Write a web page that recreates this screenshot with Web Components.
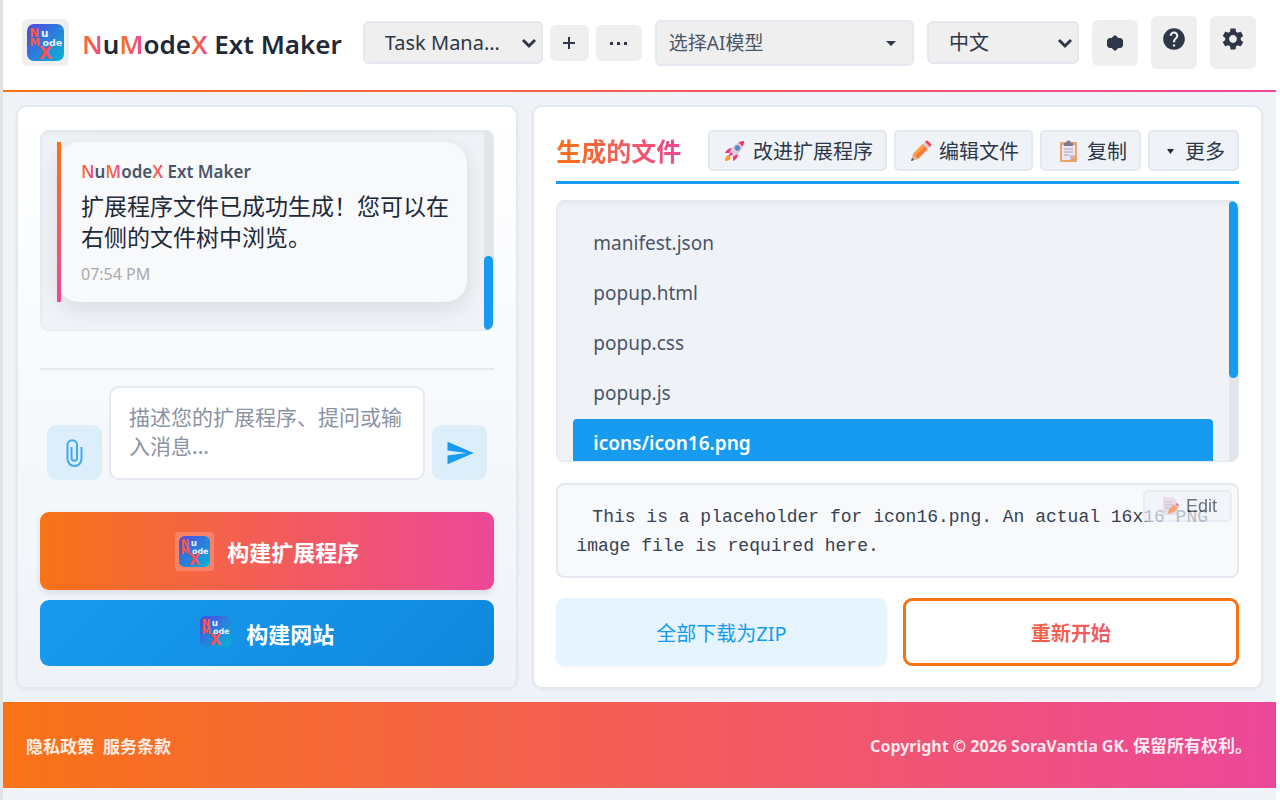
<!DOCTYPE html>
<html lang="zh-CN">
<head>
<meta charset="utf-8">
<meta name="viewport" content="width=device-width, initial-scale=1">
<title>NuModeX Ext Maker</title>
<style>
  :root {
    --orange: #f97316;
    --pink: #ec4899;
    --brand: linear-gradient(90deg, #f97316, #ec4899);
    --blue: #179bf0;
    --ink: #2d3748;
    --line: #e4e9f0;
    --pale: #eff3f8;
    --grey: #efefef;
  }
  body {
    margin: 0;
    border-left: 3px solid #e3e3e3;
    border-right: 4px solid #fff;
    background: var(--pale);
    color: var(--ink);
    font-family: "Noto Sans", "Noto Sans CJK SC", sans-serif;
  }
</style>
</head>
<body>
<nx-app></nx-app>

<script>
// shared by every component, each shadow root gets its own copy
const base = `
  *, *::before, *::after { box-sizing: border-box; }
  button, select, textarea { font-family: inherit; color: inherit; margin: 0; }
  button { cursor: pointer; }
  svg { display: block; flex: none; }
`;

const define = (name, html) => {
  customElements.define(name, class extends HTMLElement {
    constructor() {
      super();
      const shadow = this.attachShadow({ mode: "open" });
      shadow.innerHTML = `<style>${base}</style>` + (typeof html === "function" ? html(this) : html);
    }
  });
};

// square app logo, scales with --size
define("nx-logo", `
  <style>
    :host { display: block; width: var(--size, 37px); height: var(--size, 37px); flex: none; }
    svg { width: 100%; height: 100%; }
    text { font-family: "DejaVu Sans", sans-serif; font-weight: bold; }
  </style>
  <svg viewBox="0 0 74 74" aria-hidden="true">
    <defs>
      <linearGradient id="bg" x1="0" y1="0" x2="1" y2="1">
        <stop offset="0" stop-color="#4f46e5"/><stop offset="1" stop-color="#06b6d4"/>
      </linearGradient>
    </defs>
    <rect width="74" height="74" rx="14" fill="url(#bg)"/>
    <circle cx="66" cy="9" r="2" fill="#38a3d8"/>
    <text x="5" y="26" font-size="23" fill="#ff5a3c">N</text>
    <text x="28" y="25" font-size="21" fill="#e8f1ff">u</text>
    <text x="5" y="43" font-size="21" fill="#ff5a3c">M</text>
    <text x="31" y="43" font-size="19" fill="#e8f1ff">ode</text>
    <text x="23" y="69" font-size="36" fill="#f9505a">X</text>
  </svg>
`);

// product name with the gradient capitals
define("nx-brand", `
  <style>
    :host { display: inline-block; white-space: nowrap; }
    b { font-weight: inherit; background: linear-gradient(90deg, var(--orange), var(--pink)); -webkit-background-clip: text; background-clip: text; color: transparent; }
  </style>
  <b>N</b>u<b>M</b>ode<b>X</b> Ext Maker
`);

// drop-down: label is the accessible name, value the option shown
define("nx-select", (el) => `
  <style>
    :host { display: block; position: relative; height: 43px; min-width: 0; }
    :host([big]) { height: 46px; }
    select { appearance: none; width: 100%; height: 100%; padding: 0 40px 0 20px; border: 2px solid var(--line); border-radius: 6px; background: var(--grey); font-size: 20px; }
    :host([big]) select { padding-left: 12px; color: #4a5568; font-size: 19px; }
    svg { position: absolute; right: 6px; top: 50%; margin-top: -8px; pointer-events: none; }
    :host([big]) svg { right: 15px; }
  </style>
  <select aria-label="${el.getAttribute("label")}"><option>${el.getAttribute("value")}</option></select>
  ${el.hasAttribute("big")
    ? `<svg width="16" height="16" viewBox="0 0 16 16"><path d="M3 6h10l-5 5z" fill="#2d3748"/></svg>`
    : `<svg width="16" height="16" viewBox="0 0 16 16"><path d="M2 5l6 6 6-6" fill="none" stroke="#2d3748" stroke-width="3"/></svg>`}
`);

// grey header button
define("nx-icon-button", (el) => `
  <style>
    :host { display: block; flex: none; }
    button { display: flex; align-items: center; justify-content: center; width: 46px; height: 46px; padding: 0; border: 0; border-radius: 6px; background: var(--grey); font-size: 20px; font-weight: 600; }
    :host([small]) button { width: 39px; height: 36px; }
    :host([wide]) button { width: 46px; height: 36px; }
    :host([tall]) button { height: 53px; padding-bottom: 8px; }
  </style>
  <button aria-label="${el.getAttribute("label")}"><slot></slot></button>
`);

define("nx-header", `
  <style>
    :host { display: block; background: #fff; border-bottom: 2px solid; border-image: var(--brand) 1; }
    header { display: flex; align-items: center; gap: 13px; padding: 16px 20px 21px 19px; }
    .mark { padding: 5px; border-radius: 6px; background: var(--grey); }
    nx-brand { font-size: 26px; line-height: 40px; font-weight: 600; color: #1f2937; margin-top: 2px; }
    .tasks { display: flex; align-items: center; gap: 7px; margin-left: 8px; }
    .tasks nx-select { width: 180px; }
    .model { flex: 1; }
    .lang { width: 152px; }
  </style>
  <header>
    <div class="mark"><nx-logo></nx-logo></div>
    <nx-brand></nx-brand>
    <div class="tasks">
      <nx-select label="Task" value="Task Mana…"></nx-select>
      <nx-icon-button small label="New task"><svg width="14" height="14" viewBox="0 0 14 14"><path d="M7 1v12M1 7h12" stroke="#2d3748" stroke-width="2"/></svg></nx-icon-button>
      <nx-icon-button wide label="Task options"><svg width="18" height="4" viewBox="0 0 18 4"><path d="M0 1h3v3H0zM7 1h3v3H7zM14 1h3v3h-3z" fill="#2d3748"/></svg></nx-icon-button>
    </div>
    <nx-select class="model" big label="AI模型" value="选择AI模型"></nx-select>
    <nx-select class="lang" label="语言" value="中文"></nx-select>
    <nx-icon-button label="Theme"><svg width="16" height="16" viewBox="0 0 16 16"><path d="M8 0l3.500 3H14l2 2v6l-2 2h-2.500L8 16l-3.500-3H2l-2-2V5l2-2h2.500z" fill="#2d3748"/></svg></nx-icon-button>
    <nx-icon-button tall label="Help"><svg width="26" height="26" viewBox="0 0 24 24" fill="#2d3748"><path d="M12 2C6.48 2 2 6.48 2 12s4.48 10 10 10 10-4.48 10-10S17.52 2 12 2zm1 17h-2v-2h2v2zm2.07-7.75l-.9.92C13.45 12.9 13 13.5 13 15h-2v-.5c0-1.1.45-2.1 1.17-2.83l1.24-1.26c.37-.36.59-.86.59-1.41 0-1.1-.9-2-2-2s-2 .9-2 2H8c0-2.21 1.79-4 4-4s4 1.79 4 4c0 .88-.36 1.68-.93 2.25z"/></svg></nx-icon-button>
    <nx-icon-button tall label="Settings"><svg width="26" height="26" viewBox="0 0 24 24" fill="#2d3748"><path d="M19.14 12.94c.04-.3.06-.61.06-.94 0-.32-.02-.64-.07-.94l2.03-1.58c.18-.14.23-.41.12-.61l-1.92-3.32c-.12-.22-.37-.29-.59-.22l-2.39.96c-.5-.38-1.03-.7-1.62-.94l-.36-2.54c-.04-.24-.24-.41-.48-.41h-3.84c-.24 0-.43.17-.47.41l-.36 2.54c-.59.24-1.13.57-1.62.94l-2.39-.96c-.22-.08-.47 0-.59.22L2.74 8.87c-.12.21-.08.47.12.61l2.03 1.58c-.05.3-.09.63-.09.94s.02.64.07.94l-2.03 1.58c-.18.14-.23.41-.12.61l1.92 3.32c.12.22.37.29.59.22l2.39-.96c.5.38 1.03.7 1.62.94l.36 2.54c.05.24.24.41.48.41h3.84c.24 0 .44-.17.47-.41l.36-2.54c.59-.24 1.13-.56 1.62-.94l2.39.96c.22.08.47 0 .59-.22l1.92-3.32c.12-.22.07-.47-.12-.61l-2.01-1.58zM12 15.6c-1.98 0-3.6-1.62-3.6-3.6s1.62-3.6 3.6-3.6 3.6 1.62 3.6 3.6-1.62 3.6-3.6 3.6z"/></svg></nx-icon-button>
  </header>
`);

define("nx-card", `
  <style>
    :host { display: flex; flex-direction: column; min-width: 0; min-height: 0; padding: 23px 22px 21px; border: 2px solid var(--line); border-radius: 10px; background: #fff; box-shadow: 0 1px 3px rgba(0, 0, 0, .05); }
    :host([tint]) { background: linear-gradient(#fff, var(--pale)); }
  </style>
  <slot></slot>
`);

// clipped box with its own scrollbar; --thumb is the length of the handle
define("nx-scroll", `
  <style>
    :host { display: flex; flex: 1 1 0; min-height: 0; overflow: hidden; border: 1px solid var(--line); border-radius: 8px; background: var(--pale); box-shadow: inset 0 2px 4px rgba(0, 0, 0, .05); }
    .view { flex: 1; min-width: 0; overflow: hidden; }
    .track { display: flex; flex-direction: column; width: 9px; background: #e2e6ea; }
    :host([end]) .track { justify-content: flex-end; }
    .thumb { height: var(--thumb, 50%); border-radius: 5px; background: var(--blue); }
  </style>
  <div class="view"><slot></slot></div>
  <div class="track"><div class="thumb"></div></div>
`);

define("nx-message", (el) => `
  <style>
    :host { display: block; margin: 11px 17px 28px 16px; padding: 19px 18px 17px 20px; border-left: 4px solid; border-image: linear-gradient(var(--orange), var(--pink)) 1; border-radius: 22px; background: #f8f9fb; box-shadow: 0 6px 22px rgba(0, 0, 0, .1); }
    nx-brand { display: block; font-size: 17px; line-height: 22px; font-weight: 600; color: #4a5568; }
    p { margin: 8px 0 10px; font-size: 23px; line-height: 31px; color: #1f2937; }
    time { display: block; font-size: 16px; line-height: 22px; color: #a9a9a9; }
  </style>
  <nx-brand></nx-brand>
  <p><slot></slot></p>
  <time>${el.getAttribute("time")}</time>
`);

define("nx-composer", `
  <style>
    :host { display: block; margin-top: 37px; padding: 16px 7px 0; border-top: 2px solid var(--line); }
    form { display: flex; align-items: flex-end; gap: 7px; }
    textarea { flex: 1; min-width: 0; height: 94px; padding: 15px 18px; border: 2px solid var(--line); border-radius: 10px; background: #fff; font-size: 21px; line-height: 29px; resize: none; overflow: hidden; }
    textarea::placeholder { color: #8a93a3; }
    button { display: flex; align-items: center; justify-content: center; width: 55px; height: 55px; padding: 0; border: 0; border-radius: 9px; background: #dceefa; }
  </style>
  <form>
    <button type="button" aria-label="附件"><svg width="18" height="28" viewBox="0 0 18 28" fill="none" stroke="#3fa8ee" stroke-width="2"><path d="M5.500 8v11a2.700 2.700 0 0 0 5.500 0V6a4.700 4.700 0 0 0-9.500 0v14a7 7 0 0 0 14 0V8"/></svg></button>
    <textarea aria-label="消息" placeholder="描述您的扩展程序、提问或输入消息..."></textarea>
    <button type="button" aria-label="发送"><svg width="30" height="30" viewBox="0 0 24 24" fill="#179bf0"><path d="M2.010 21L23 12 2.010 3 2 10l15 2-15 2z"/></svg></button>
  </form>
`);

define("nx-build", `
  <style>
    :host { display: block; margin-top: 32px; }
    :host([site]) { margin-top: 10px; }
    button { display: flex; align-items: center; justify-content: center; gap: 13px; width: 100%; height: 78px; padding: 0; border: 0; border-radius: 9px; background: var(--brand); color: #fff; font-size: 22px; font-weight: 700; box-shadow: 0 3px 6px rgba(0, 0, 0, .1); }
    :host([site]) button { height: 66px; background: linear-gradient(135deg, #179bf0, #0f88dc); box-shadow: none; }
    .mark { padding: 4px; border-radius: 4px; background: rgba(255, 255, 255, .2); --size: 31px; }
    :host([site]) .mark { background: none; padding: 0 2px 4px 0; }
  </style>
  <button type="button"><span class="mark"><nx-logo></nx-logo></span><slot></slot></button>
`);

define("nx-tool", `
  <style>
    :host { display: block; flex: none; }
    button { display: flex; align-items: center; gap: 7px; height: 41px; padding: 0 12px 0 14px; border: 2px solid var(--line); border-radius: 5px; background: var(--pale); font-size: 20px; white-space: nowrap; }
  </style>
  <button type="button"><slot name="icon"></slot><slot></slot></button>
`);

define("nx-files-head", `
  <style>
    :host { display: flex; align-items: center; justify-content: space-between; padding-bottom: 10px; border-bottom: 3px solid var(--blue); }
    h2 { margin: 0; font-size: 25px; line-height: 36px; font-weight: 700; white-space: nowrap; background: var(--brand); -webkit-background-clip: text; background-clip: text; color: transparent; }
    .tools { display: flex; gap: 7px; }
  </style>
  <h2>生成的文件</h2>
  <div class="tools">
    <nx-tool>
      <svg slot="icon" width="22" height="22" viewBox="0 0 22 22">
        <path d="M1 21c0-3 1-5 3-6l3 3c-1 2-3 3-6 3z" fill="#ff9a2e"/>
        <path d="M8 8c-3 0-6 2-7 5l5 0zM14 14c0 3-2 6-5 7l0-5z" fill="#f5337c"/>
        <path d="M5 14C7 7 12 2 20 1c0 8-5 13-12 16z" fill="#d9cfe3"/>
        <path d="M20 1c-2 0-4 .5-5.500 1.500l4 4C19.500 5 20 3 20 1z" fill="#f5385e"/>
        <path d="M7 12l-3 5 5-3z" fill="#f0287a"/>
        <circle cx="13.500" cy="8" r="2.300" fill="#4a8fe0" stroke="#7b7299" stroke-width="1"/>
      </svg>
      改进扩展程序
    </nx-tool>
    <nx-tool>
      <svg slot="icon" width="22" height="22" viewBox="0 0 22 22">
        <path d="M1 21l2-7 5 5z" fill="#e0b090"/><path d="M1 21l1-3 2 2z" fill="#5b4a5e"/>
        <path d="M3 14L13 4l5 5L8 19z" fill="#fb7a35"/><path d="M3 14L13 4l2 2L5 16z" fill="#ffa04a"/>
        <path d="M13 4l2-2 5 5-2 2z" fill="#d4cfe0"/><path d="M15 2c1-2 3-1 4 0l1 1c2 2 1 3 0 4z" fill="#f5414e"/>
      </svg>
      编辑文件
    </nx-tool>
    <nx-tool>
      <svg slot="icon" width="24" height="22" viewBox="0 0 24 22">
        <rect x="4" y="2" width="17" height="20" rx="1" fill="#e5a56d"/>
        <path d="M6 5h13v10l-5 5H6z" fill="#ece6f2"/><path d="M19 15l-5 5v-5z" fill="#c9b9d6"/>
        <path d="M8 9h9M8 12h9M8 15h5" stroke="#a99bbb" stroke-width="1"/>
        <path d="M8 3h2a2.500 2.500 0 0 1 5 0h2v3H8z" fill="#837891"/>
      </svg>
      复制
    </nx-tool>
    <nx-tool>
      <svg slot="icon" width="14" height="14" viewBox="0 0 14 14"><path d="M3 5h7l-3.500 5z" fill="#1f2937"/></svg>
      更多
    </nx-tool>
  </div>
`);

define("nx-file", `
  <style>
    :host { display: block; margin: 0 16px 2px; }
    button { display: block; width: 100%; height: 48px; padding: 0 20px; border: 0; border-radius: 4px; background: none; color: #4a5568; font-size: 19px; text-align: left; }
    :host([selected]) button { background: var(--blue); color: #fff; font-weight: 600; }
    :host(:first-of-type) { margin-top: 18px; }
  </style>
  <button type="button"><slot></slot></button>
`);

define("nx-preview", `
  <style>
    :host { display: block; position: relative; margin-top: 21px; padding: 18px 17px 15px 18px; border: 2px solid var(--line); border-radius: 8px; background: #f8f9fb; }
    pre { margin: 0; font: 18px/29px "Liberation Mono", monospace; white-space: pre-wrap; text-indent: 16px; color: #374151; }
    button { position: absolute; top: 5px; right: 5px; display: flex; align-items: center; gap: 6px; height: 32px; padding: 0 13px 0 17px; border: 2px solid var(--line); border-radius: 5px; background: var(--pale); font: 18px "Liberation Sans", sans-serif; opacity: .7; }
  </style>
  <pre><slot></slot></pre>
  <button type="button">
    <svg width="18" height="20" viewBox="0 0 18 20">
      <path d="M1 1h10l4 4v14H1z" fill="#ddd3e2"/><path d="M3 6h7M3 9h9M3 12h5" stroke="#b3a5bd" stroke-width="1"/>
      <path d="M6 18l1-5 5-4 4 3-4 4z" fill="#f97a3c"/><path d="M13 8l2-1 2 2-1 2z" fill="#f5414e"/>
    </svg>
    Edit
  </button>
`);

define("nx-actions", `
  <style>
    :host { display: flex; gap: 16px; margin-top: 20px; }
    button { flex: 1 1 0; height: 68px; padding: 0 20px; border: 0; border-radius: 9px; font-size: 20px; }
    .zip { background: #e5f4fd; color: var(--blue); box-shadow: 0 2px 4px rgba(0, 0, 0, .04); }
    .reset { border: 3px solid var(--orange); background: #fff; font-weight: 600; }
    .reset span { display: block; background: var(--brand); -webkit-background-clip: text; background-clip: text; color: transparent; }
  </style>
  <button type="button" class="zip">全部下载为ZIP</button>
  <button type="button" class="reset"><span>重新开始</span></button>
`);

define("nx-footer", `
  <style>
    :host { display: block; margin-bottom: 12px; background: var(--brand); color: rgba(255, 255, 255, .88); font-size: 17px; line-height: 25px; font-weight: 700; }
    footer { display: flex; align-items: center; justify-content: space-between; padding: 31px 24px 29px 23px; }
    nav { display: flex; gap: 9px; }
    a { color: inherit; text-decoration: none; }
    .latin { font-size: 16px; }
  </style>
  <footer>
    <nav><a href="#privacy">隐私政策</a><a href="#terms">服务条款</a></nav>
    <span><span class="latin">Copyright © 2026 SoraVantia GK.</span> 保留所有权利。</span>
  </footer>
`);

// page frame: header, two columns, footer
define("nx-app", `
  <style>
    :host { display: flex; flex-direction: column; height: 100vh; }
    main { display: grid; grid-template-columns: 11fr 16fr; grid-template-rows: minmax(0, 1fr); gap: 14px; flex: 1; min-height: 0; padding: 13px; }
    .log { --thumb: 37%; }
    .tree { --thumb: 68%; margin-top: 16px; }
  </style>
  <nx-header></nx-header>
  <main>
    <nx-card tint>
      <nx-scroll class="log" end>
        <nx-message time="07:54 PM">扩展程序文件已成功生成！您可以在右侧的文件树中浏览。</nx-message>
      </nx-scroll>
      <nx-composer></nx-composer>
      <nx-build>构建扩展程序</nx-build>
      <nx-build site>构建网站</nx-build>
    </nx-card>
    <nx-card>
      <nx-files-head></nx-files-head>
      <nx-scroll class="tree">
        <nx-file>manifest.json</nx-file>
        <nx-file>popup.html</nx-file>
        <nx-file>popup.css</nx-file>
        <nx-file>popup.js</nx-file>
        <nx-file selected>icons/icon16.png</nx-file>
      </nx-scroll>
      <nx-preview>This is a placeholder for icon16.png. An actual 16x16 PNG image file is required here.</nx-preview>
      <nx-actions></nx-actions>
    </nx-card>
  </main>
  <nx-footer></nx-footer>
`);
</script>
</body>
</html>
